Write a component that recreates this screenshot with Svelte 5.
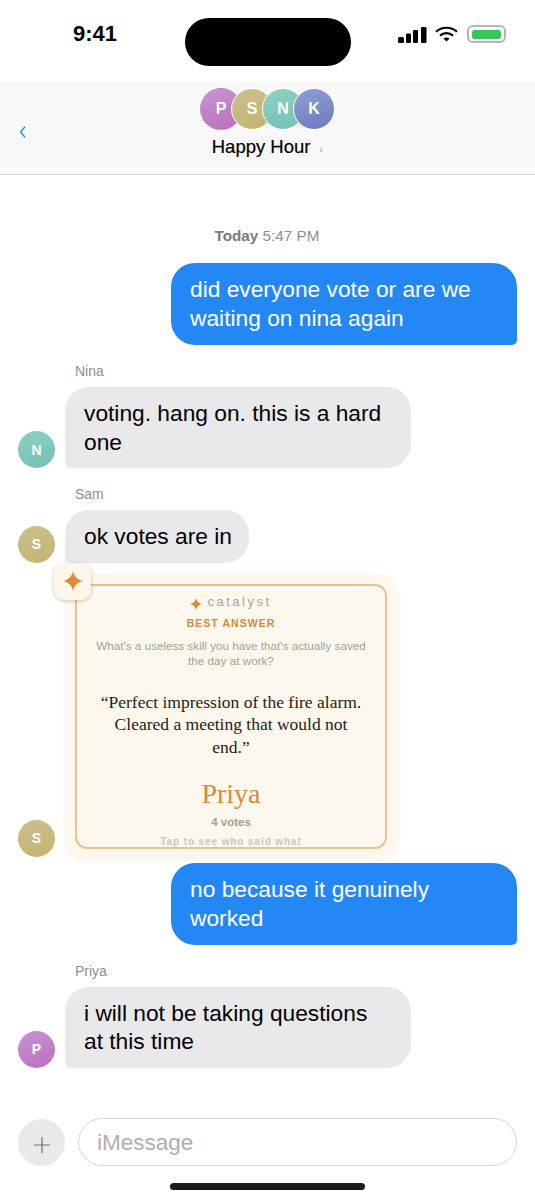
<script>
  const members = [
    { l: "P", c: "purple" },
    { l: "S", c: "olive" },
    { l: "N", c: "teal" },
    { l: "K", c: "indigo" },
  ];
  const star = "M10 0C11 5.5 14.5 9 20 10 14.5 11 11 14.5 10 20 9 14.5 5.5 11 0 10 5.5 9 9 5.5 10 0Z";
</script>

<div class="phone">
  <div class="status">
    <span class="time">9:41</span>
    <div class="island"></div>
    <div class="indicators">
      <svg class="signal" width="29" height="16" viewBox="0 0 29 16">
        <rect x="0" y="10" width="6" height="6" rx="1.5" />
        <rect x="8" y="6.5" width="5" height="9.5" rx="1.2" />
        <rect x="15" y="3" width="5" height="13" rx="1.2" />
        <rect x="23" y="0" width="5.5" height="16" rx="1.2" />
      </svg>
      <svg class="wifi" width="23" height="16" viewBox="0 0 23 16" fill="none" stroke="#000" stroke-width="2.2">
        <path d="M1 5.7C6.8 .4 16.2 .4 22 5.7" />
        <path d="M5 9.6C8.6 6.4 14.4 6.4 18 9.6" />
        <path d="M11.5 15.5 8.4 12.6C10.1 11.2 12.9 11.2 14.6 12.6Z" fill="#000" stroke="none" />
      </svg>
      <div class="battery"><div class="charge"></div></div>
    </div>
  </div>

  <header class="nav">
    <svg class="back" width="8" height="12" viewBox="0 0 8 12" fill="none" stroke="#1a84e8" stroke-width="1.3">
      <path d="M6 .8 1.5 6 6 11.2" />
    </svg>
    <div class="avatars">
      {#each members as m}
        <div class="stack {m.c}">{m.l}</div>
      {/each}
    </div>
    <div class="title">Happy Hour <span class="chev">›</span></div>
  </header>

  <main class="thread">
    <div class="stamp"><b>Today</b> 5:47 PM</div>

    <div class="bubble out first">did everyone vote or are we waiting on nina again</div>

    <div class="name">Nina</div>
    <div class="row">
      <div class="avatar teal">N</div>
      <div class="bubble in">voting. hang on. this is a hard one</div>
    </div>

    <div class="name">Sam</div>
    <div class="row">
      <div class="avatar olive">S</div>
      <div class="bubble in short">ok votes are in</div>
    </div>

    <div class="row card-row">
      <div class="avatar olive lifted">S</div>
      <div class="card">
        <div class="badge">
          <svg width="20" height="20" viewBox="0 0 20 20"><path d={star} fill="#dd8a35" /></svg>
        </div>
        <div class="frame">
          <div class="brand">
            <svg width="12" height="12" viewBox="0 0 20 20"><path d={star} fill="#dd8a35" /></svg>
            <span>catalyst</span>
          </div>
          <div class="label">BEST ANSWER</div>
          <p class="question">What's a useless skill you have that's actually saved the day at work?</p>
          <p class="quote">“Perfect impression of the fire alarm. Cleared a meeting that would not end.”</p>
          <div class="winner">Priya</div>
          <div class="votes">4 votes</div>
          <div class="tap">Tap to see who said what</div>
        </div>
      </div>
    </div>

    <div class="bubble out second">no because it genuinely worked</div>

    <div class="name">Priya</div>
    <div class="row">
      <div class="avatar purple">P</div>
      <div class="bubble in">i will not be taking questions at this time</div>
    </div>
  </main>

  <footer class="composer">
    <div class="plus">
      <svg width="16" height="16" viewBox="0 0 16 16" stroke="#6e6e72" stroke-width="1.2"><path d="M8 0V16M0 8H16" /></svg>
    </div>
    <div class="field">iMessage</div>
  </footer>
  <div class="home"></div>
</div>

<style>
  :global(body) {
    background: #fff;
  }
  .phone {
    width: 535px;
    height: 1200px;
    display: flex;
    flex-direction: column;
    overflow: hidden;
    font-family: "Liberation Sans", Arial, sans-serif;
    color: #000;
  }
  .status {
    height: 82px;
    display: grid;
    grid-template-columns: 185px 166px 184px;
    flex-shrink: 0;
  }
  .time {
    font-size: 22px;
    font-weight: 700;
    text-align: center;
    line-height: 28px;
    padding: 20px 0 0 5px;
  }
  .island {
    width: 166px;
    height: 48px;
    margin-top: 18px;
    border-radius: 24px;
    background: #000;
  }
  .indicators {
    display: flex;
    align-items: flex-start;
    padding: 27px 0 0 47px;
    gap: 7px;
  }
  .wifi {
    margin-top: -1px;
    margin-left: 1px;
  }
  .battery {
    width: 39px;
    height: 18px;
    box-sizing: border-box;
    border: 2px solid #b4b4b4;
    border-radius: 6px;
    padding: 2.5px 3px;
    margin-left: 2px;
    margin-top: -2px;
  }
  .charge {
    height: 100%;
    border-radius: 2.5px;
    background: #34c759;
  }
  .nav {
    height: 93px;
    box-sizing: border-box;
    background: #f8f8f9;
    border-bottom: 1.5px solid #d6d6d8;
    position: relative;
    display: flex;
    flex-direction: column;
    align-items: center;
    padding-top: 6px;
    flex-shrink: 0;
  }
  .back {
    position: absolute;
    left: 19px;
    top: 43.5px;
  }
  .avatars {
    display: flex;
  }
  .stack {
    width: 42px;
    height: 42px;
    box-sizing: border-box;
    border-radius: 50%;
    border: 1.5px solid #fff;
    margin-left: -11px;
    display: flex;
    align-items: center;
    justify-content: center;
    color: #fff;
    font-size: 16px;
    font-weight: 700;
  }
  .stack:first-child {
    margin-left: 0;
    border-color: transparent;
  }
  .title {
    font-size: 18.5px;
    line-height: 22px;
    margin-top: 6px;
    -webkit-text-stroke: 0.2px #000;
  }
  .chev {
    font-size: 11px;
    color: #9a9a9e;
    margin-left: 4px;
    -webkit-text-stroke: 0;
  }
  .purple {
    background: linear-gradient(160deg, #c795d2, #b96fbb);
  }
  .olive {
    background: linear-gradient(160deg, #cdbf8d, #c2b56e);
  }
  .teal {
    background: linear-gradient(160deg, #8fd0c4, #72c0b6);
  }
  .indigo {
    background: linear-gradient(160deg, #8fa0d4, #6f77c0);
  }
  .thread {
    flex: 1;
    display: flex;
    flex-direction: column;
    padding: 0 18px;
  }
  .stamp {
    font-size: 15.3px;
    line-height: 18px;
    color: #8e8e93;
    text-align: center;
    margin-top: 52px;
    padding-right: 1px;
  }
  .stamp b {
    color: #7a7a7e;
  }
  .bubble {
    box-sizing: border-box;
    font-size: 22.75px;
    padding: 12px 19px;
    border-radius: 24px;
  }
  .out {
    align-self: flex-end;
    width: 346px;
    background: #2388f6;
    color: #fff;
    line-height: 29px;
    border-bottom-right-radius: 5px;
  }
  .first {
    margin-top: 18px;
  }
  .second {
    margin-top: 3px;
  }
  .in {
    background: #e9e9eb;
    line-height: 28.5px;
    border-bottom-left-radius: 5px;
    max-width: 346px;
  }
  .short {
    padding-right: 17px;
  }
  .name {
    font-size: 14px;
    line-height: 16px;
    color: #8e8e93;
    padding-left: 57px;
    margin: 18px 0 8px;
  }
  .row {
    display: flex;
    align-items: flex-end;
    gap: 10px;
  }
  .avatar {
    width: 37px;
    height: 37px;
    border-radius: 50%;
    flex-shrink: 0;
    display: flex;
    align-items: center;
    justify-content: center;
    color: #fff;
    font-size: 14px;
    font-weight: 700;
  }
  .lifted {
    margin-bottom: 3px;
  }
  .card-row {
    margin-top: 11px;
  }
  .card {
    position: relative;
    width: 333px;
    height: 286px;
    box-sizing: border-box;
    padding: 10.5px 11px 11px 10px;
    background: #fdf8ed;
    border-radius: 20px;
    box-shadow: 0 1px 4px rgba(150, 125, 70, 0.08);
  }
  .badge {
    position: absolute;
    left: -11px;
    top: -11px;
    width: 37px;
    height: 37px;
    border-radius: 10px;
    background: #fdf7ea;
    box-shadow: 0 1px 4px rgba(90, 70, 40, 0.3);
    display: flex;
    align-items: center;
    justify-content: center;
  }
  .frame {
    height: 100%;
    box-sizing: border-box;
    border: 2px solid #eec08f;
    border-radius: 12px;
    text-align: center;
    padding: 8px 16px 0;
    display: flex;
    flex-direction: column;
    align-items: center;
  }
  .brand {
    display: flex;
    align-items: center;
    gap: 5px;
    font-size: 13px;
    line-height: 16px;
    letter-spacing: 2.5px;
    color: #a8a49b;
  }
  .brand svg {
    margin-top: 4px;
  }
  .label {
    font-size: 10.5px;
    font-weight: 700;
    letter-spacing: 1.05px;
    line-height: 14px;
    color: #d9873a;
    margin-top: 5.5px;
  }
  .question {
    margin: 8.5px 0 0;
    font-size: 11.7px;
    line-height: 15px;
    color: #a3a097;
  }
  .quote {
    width: 268px;
    margin: 22.5px 0 0;
    font-family: "Liberation Serif", serif;
    font-size: 17.5px;
    line-height: 22.5px;
    color: #222;
  }
  .winner {
    font-family: "Liberation Serif", serif;
    font-size: 28px;
    line-height: 32px;
    color: #d9893c;
    margin-top: 20px;
  }
  .votes {
    font-size: 11.5px;
    font-weight: 700;
    line-height: 14px;
    color: #a3a097;
    margin-top: 4.5px;
  }
  .tap {
    font-size: 10px;
    font-weight: 700;
    letter-spacing: 0.9px;
    line-height: 13px;
    color: #c9c6bd;
    margin-top: 6px;
    white-space: nowrap;
  }
  .composer {
    display: flex;
    align-items: center;
    gap: 13px;
    padding: 0 18px;
    height: 50px;
    flex-shrink: 0;
  }
  .plus {
    width: 47px;
    height: 47px;
    border-radius: 50%;
    background: #e9e9eb;
    display: flex;
    align-items: center;
    justify-content: center;
    flex-shrink: 0;
    margin-top: 1px;
  }
  .plus svg {
    margin-top: 5px;
  }
  .field {
    flex: 1;
    height: 48px;
    box-sizing: border-box;
    border: 1.5px solid #d6d6d8;
    border-radius: 24px;
    padding: 0 18px;
    font-size: 22.5px;
    line-height: 48px;
    color: #aeaeb2;
  }
  .home {
    width: 195px;
    height: 7px;
    border-radius: 4px;
    background: #1c1c1e;
    margin: 16px auto 10px;
    flex-shrink: 0;
  }
</style>
